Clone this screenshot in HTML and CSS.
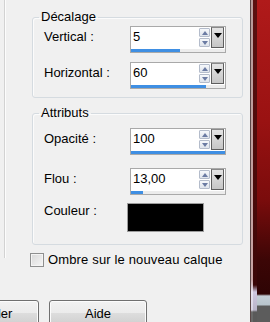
FILE: index.html
```html
<!DOCTYPE html>
<html>
<head>
    <title>Ombre portée</title>
    <link rel="stylesheet" href="styles.css">
</head>
<body>
    <div class="screen">
        <div class="dialog">
            <div class="edge"></div>
            <div class="content">
                <fieldset class="group group-offset">
                    <legend>Décalage</legend>
                    <div class="field">
                        <label>Vertical :</label>
                        <div class="spinbox">
                            <div class="spin-top">
                                <span class="value">5</span>
                                <span class="arrows"><span class="arrow up"></span><span class="arrow down"></span></span>
                                <span class="drop"></span>
                            </div>
                            <div class="track"><div class="fill" style="width: 52.5%"></div></div>
                        </div>
                    </div>
                    <div class="field">
                        <label>Horizontal :</label>
                        <div class="spinbox">
                            <div class="spin-top">
                                <span class="value">60</span>
                                <span class="arrows"><span class="arrow up"></span><span class="arrow down"></span></span>
                                <span class="drop"></span>
                            </div>
                            <div class="track"><div class="fill" style="width: 80%"></div></div>
                        </div>
                    </div>
                </fieldset>

                <fieldset class="group group-attr">
                    <legend>Attributs</legend>
                    <div class="field">
                        <label>Opacité :</label>
                        <div class="spinbox">
                            <div class="spin-top">
                                <span class="value">100</span>
                                <span class="arrows"><span class="arrow up"></span><span class="arrow down"></span></span>
                                <span class="drop"></span>
                            </div>
                            <div class="track"><div class="fill" style="width: 100%"></div></div>
                        </div>
                    </div>
                    <div class="field">
                        <label>Flou :</label>
                        <div class="spinbox">
                            <div class="spin-top">
                                <span class="value">13,00</span>
                                <span class="arrows"><span class="arrow up"></span><span class="arrow down"></span></span>
                                <span class="drop"></span>
                            </div>
                            <div class="track"><div class="fill" style="width: 13%"></div></div>
                        </div>
                    </div>
                    <div class="field color-row">
                        <label>Couleur :</label>
                        <div class="swatch"></div>
                    </div>
                </fieldset>

                <label class="check"><span class="box"></span>Ombre sur le nouveau calque</label>

                <div class="buttons">
                    <button>Annuler</button>
                    <button>Aide</button>
                </div>
            </div>
        </div>

        <!-- bit of the picture window behind the dialog -->
        <div class="frame">
            <div class="frame-line"></div>
            <div class="frame-light"></div>
            <div class="frame-dark"></div>
            <div class="frame-red"></div>
        </div>
    </div>
</body>
</html>
```

FILE: styles.css
```css
body {
    font-family: "Liberation Sans", Arial, sans-serif;
    font-size: 13px;
    color: #000;
    margin: 0;
    padding: 0;
    background: #f0f0f0;
    overflow: hidden;
}

.screen {
    display: flex;
    height: 322px;
}

.dialog {
    width: 250px;
    display: flex;
    background: #f0f0f0;
}

.edge {
    width: 4px;
    height: 258px;
    border-right: 1px solid #d2d2d2;
    box-shadow: 1px 0 #fcfcfc;
}

.content {
    flex: 1;
    padding-left: 27px;
}

.group {
    width: 211px;
    box-sizing: border-box;
    margin: 0;
    padding: 2px 0 8px 11px;
    border: 1px solid #d5dbe0;
    border-radius: 3px;
    box-shadow: inset 1px 1px #fbfbfb;
}

.group legend {
    line-height: 14px;
    padding: 0 2px;
    margin-left: -5px;
}

.group-offset {
    margin-top: 10px;
}

.group-attr {
    margin-top: 8px;
    padding-top: 8px;
    padding-bottom: 12px;
}

.field {
    display: flex;
    align-items: flex-start;
}

.field label {
    width: 86px;
    line-height: 15px;
    margin-top: 3px;
}

.group-offset .field + .field {
    margin-top: 9px;
}

.group-attr .field + .field {
    margin-top: 13px;
}

.group-attr .field.color-row {
    margin-top: 8px;
}

.color-row label {
    margin-top: 0;
}

.spinbox {
    width: 96px;
    height: 27px;
    box-sizing: border-box;
    border: 1px solid #a9a9a9;
    background: #fff;
    display: flex;
    flex-direction: column;
}

.spin-top {
    display: flex;
    height: 21px;
}

.value {
    flex: 1;
    padding: 2px 0 0 2px;
    line-height: 15px;
}

.arrows {
    width: 11px;
    display: flex;
    flex-direction: column;
    gap: 1px;
    padding-top: 1px;
}

.arrow {
    height: 9px;
    box-sizing: border-box;
    border: 1px solid #b4bccb;
    border-radius: 1px;
    background: linear-gradient(#f6f8fb, #dfe4ec);
    display: flex;
    align-items: center;
    justify-content: center;
}

.arrow::after {
    content: "";
    border-left: 3px solid transparent;
    border-right: 3px solid transparent;
}

.arrow.up::after {
    border-bottom: 4px solid #6b7ba3;
}

.arrow.down::after {
    border-top: 4px solid #6b7ba3;
}

.drop {
    width: 13px;
    margin: 0 1px 0 1px;
    box-sizing: border-box;
    border: 1px solid #5e5e5e;
    border-top-color: #8a8a8a;
    background: linear-gradient(#e4e4e4, #c6c6c6);
    display: flex;
    justify-content: center;
    padding-top: 5px;
}

.drop::after {
    content: "";
    height: 0;
    border-left: 4px solid transparent;
    border-right: 4px solid transparent;
    border-top: 5px solid #000;
}

.track {
    height: 3px;
    background: #ececec;
    margin-top: 1px;
}

.fill {
    height: 100%;
    background: #3f8fe3;
}

.swatch {
    width: 77px;
    height: 29px;
    margin-left: -3px;
    box-sizing: border-box;
    border: 1px solid #9c9c9c;
    background: #000;
}

.check {
    display: flex;
    align-items: center;
    margin: 7px 0 0 -2px;
    line-height: 15px;
    letter-spacing: 0.15px;
}

.check .box {
    width: 14px;
    height: 14px;
    box-sizing: border-box;
    border: 1px solid #8e8f8f;
    background: linear-gradient(135deg, #d8d8d8, #f6f6f6);
    box-shadow: inset 0 0 0 1px #f4f4f4;
    margin-right: 4px;
}

.buttons {
    display: flex;
    gap: 10px;
    margin: 33px 0 0 -91px;
}

.buttons button {
    width: 98px;
    height: 26px;
    flex: none;
    font-family: inherit;
    font-size: 13px;
    color: #000;
    border: 1px solid #707070;
    border-radius: 3px;
    background: linear-gradient(#f2f2f2 0%, #ebebeb 50%, #dddddd 51%, #cfcfcf 100%);
    box-shadow: inset 0 0 0 1px #fcfcfc;
    padding: 0;
}

.frame {
    flex: 1;
    display: flex;
}

.frame-line {
    width: 1px;
    background: #5a4646;
}

.frame-light {
    width: 2px;
    background: linear-gradient(#b89a9a 0, #c8a4a4 280px, #e8e4f0 292px, #d8d4e4 310px, #6a6a6a 312px);
}

.frame-dark {
    width: 4px;
    background: linear-gradient(#5c1010 0, #4a0a0a 200px, #3a0606 285px, #cfc8e0 292px, #b8b4c8 310px, #5a5a5a 312px);
}

.frame-red {
    flex: 1;
    background: linear-gradient(#b01a1a 0, #9a1212 120px, #7a0c0c 200px, #3c0606 260px, #2e0404 294px, #c4ced6 296px, #b8c4cc 305px, #5c5c5c 306px);
}
```
